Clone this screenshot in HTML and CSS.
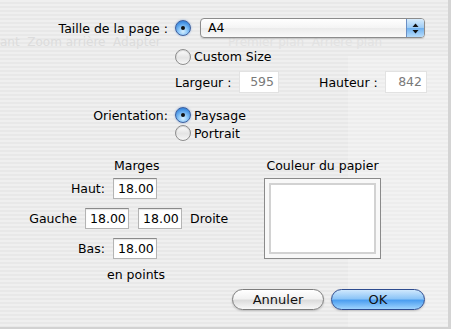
FILE: index.html
```html
<!DOCTYPE html>
<html lang="fr">
<head>
    <meta charset="UTF-8">
    <title>Mise en page</title>
    <link rel="stylesheet" href="styles.css">
</head>
<body>
    <div class="sheet">
        <!-- ghosted toolbar behind the sheet -->
        <div class="ghost">
            <span class="ghost-left">ant&nbsp;&nbsp;Zoom arrière&nbsp;&nbsp;Adapter</span>
            <span class="ghost-right">Premier plan&nbsp;&nbsp;Arrière plan</span>
        </div>
        <div class="ghost-pane"></div>

        <div class="form">
            <div class="row row-size">
                <label class="label">Taille de la page :</label>
                <div class="ctrl">
                    <span class="radio on"></span>
                    <div class="popup">
                        <span class="popup-text">A4</span>
                        <span class="popup-arrows">
                            <svg width="7" height="11" viewBox="0 0 7 11">
                                <path d="M3.5 0.5 L6.5 4 L0.5 4 Z" fill="#111"/>
                                <path d="M3.5 10.5 L6.5 7 L0.5 7 Z" fill="#111"/>
                            </svg>
                        </span>
                    </div>
                </div>
            </div>

            <div class="row row-custom">
                <span></span>
                <div class="ctrl">
                    <span class="radio"></span>
                    <span class="opt">Custom Size</span>
                </div>
            </div>

            <div class="row row-dims">
                <span></span>
                <div class="ctrl dims">
                    <span class="dim-label">Largeur :</span>
                    <span class="field num">595</span>
                    <span class="dim-label hauteur">Hauteur :</span>
                    <span class="field num wide">842</span>
                </div>
            </div>

            <div class="row row-orient">
                <label class="label">Orientation:</label>
                <div class="ctrl">
                    <span class="radio on"></span>
                    <span class="opt">Paysage</span>
                </div>
            </div>

            <div class="row row-portrait">
                <span></span>
                <div class="ctrl">
                    <span class="radio"></span>
                    <span class="opt">Portrait</span>
                </div>
            </div>
        </div>

        <div class="lower">
            <div class="margins">
                <div class="title">Marges</div>
                <div class="mrow">
                    <span class="mlabel" style="width: 105px">Haut:</span>
                    <span class="field">18.00</span>
                </div>
                <div class="mrow">
                    <span class="mlabel" style="width: 77px">Gauche</span>
                    <span class="field">18.00</span>
                    <span class="field right">18.00</span>
                    <span class="side">Droite</span>
                </div>
                <div class="mrow">
                    <span class="mlabel" style="width: 105px">Bas:</span>
                    <span class="field">18.00</span>
                </div>
                <div class="units">en points</div>
            </div>

            <div class="paper">
                <div class="title">Couleur du papier</div>
                <div class="well">
                    <div class="well-inner"></div>
                </div>
            </div>
        </div>

        <div class="buttons">
            <button type="button" class="btn">Annuler</button>
            <button type="button" class="btn default">OK</button>
        </div>
    </div>
</body>
</html>
```

FILE: styles.css
```css
* {
    box-sizing: border-box;
}

body {
    margin: 0;
    font-family: "DejaVu Sans", "Liberation Sans", sans-serif;
    font-size: 12.5px;
    color: #000;
}

.sheet {
    position: relative;
    width: 451px;
    height: 329px;
    background: repeating-linear-gradient(to bottom, #efefef 0, #efefef 2px, #e8e8e8 2px, #e8e8e8 4px);
    border-right: 3px solid #d4d4d4;
    border-bottom: 2px solid #d2d2d2;
    padding-top: 18px;
    overflow: hidden;
}

.ghost {
    position: absolute;
    left: 0;
    top: 35px;
    width: 100%;
    color: #dcdcdc;
    font-size: 12px;
    white-space: nowrap;
}

.ghost-left {
    position: absolute;
    left: 0;
}

.ghost-right {
    position: absolute;
    left: 228px;
    color: #e2e2e2;
}

.ghost-pane {
    position: absolute;
    left: 348px;
    top: 56px;
    right: 0;
    bottom: 0;
    background: rgba(255, 255, 255, 0.22);
}

.form {
    position: relative;
}

.row {
    display: grid;
    grid-template-columns: 168px 1fr;
    column-gap: 7px;
    align-items: center;
    padding-right: 23px;
}

.label {
    text-align: right;
    white-space: nowrap;
}

.ctrl {
    display: flex;
    align-items: center;
}

.row-size { height: 20px; }
.row-custom { height: 19px; margin-top: 9px; }
.row-dims { height: 22px; margin-top: 5px; }
.row-orient { height: 18px; margin-top: 13px; }
.row-portrait { height: 18px; }

.radio {
    position: relative;
    width: 16px;
    height: 16px;
    flex: none;
    border-radius: 50%;
    border: 1px solid #8d8d8d;
    background: linear-gradient(to bottom, #fdfdfd, #e4e4e4 55%, #f7f7f7);
    box-shadow: inset 0 1px 1px rgba(0, 0, 0, 0.15);
}

.radio.on {
    border-color: #3d5f9e;
    background: radial-gradient(circle at 50% 75%, #d6efff 0, #8cc6f7 35%, #3d8ce0 75%, #2f72cc 100%);
    box-shadow: 0 0 2px rgba(40, 110, 210, 0.5);
}

.radio.on::after {
    content: "";
    position: absolute;
    left: 5px;
    top: 5px;
    width: 4px;
    height: 4px;
    border-radius: 50%;
    background: #111;
}

.opt {
    margin-left: 3px;
}

.popup {
    flex: 1;
    display: flex;
    height: 20px;
    margin-left: 9px;
    border: 1px solid #8c8c8c;
    border-radius: 4px;
    background: linear-gradient(to bottom, #ffffff, #f4f4f4 50%, #ebebeb 51%, #fafafa);
    box-shadow: 0 1px 1px rgba(0, 0, 0, 0.15);
    overflow: hidden;
}

.popup-text {
    flex: 1;
    padding-left: 7px;
    line-height: 18px;
}

.popup-arrows {
    width: 18px;
    display: flex;
    align-items: center;
    justify-content: center;
    border-left: 1px solid #6b8fc4;
    background: linear-gradient(to bottom, #d8ecfc, #9ccbf5 50%, #6fb1f0 51%, #b6dcfb);
}

.dim-label {
    width: 64px;
}

.dim-label.hauteur {
    width: 66px;
    margin-left: 40px;
}

.field {
    display: inline-block;
    width: 44px;
    height: 21px;
    padding: 0 4px;
    line-height: 20px;
    background: #fff;
    border: 1px solid #b4b4b4;
    border-top-color: #8a8a8a;
    box-shadow: inset 0 1px 1px rgba(0, 0, 0, 0.1);
}

.field.num {
    width: 40px;
    height: 22px;
    text-align: right;
    color: #7a7a7a;
    border-color: #e2e2e2;
    box-shadow: none;
}

.field.num.wide {
    width: 42px;
}

.lower {
    position: relative;
    display: flex;
    margin-top: 16px;
}

.title {
    height: 16px;
    line-height: 16px;
    text-align: center;
    margin-bottom: 4px;
}

.margins {
    width: 264px;
}

.margins .title {
    width: 273px;
    text-align: left;
    padding-left: 114px;
}

.mrow {
    display: flex;
    align-items: center;
    height: 21px;
    margin-bottom: 9px;
}

.mlabel {
    text-align: right;
    margin-right: 8px;
}

.field.right {
    margin-left: 9px;
}

.side {
    margin-left: 8px;
}

.units {
    padding-left: 107px;
    margin-top: -1px;
    line-height: 16px;
}

.paper {
    width: 117px;
}

.paper .title {
    margin: 0 -20px 4px;
}

.well {
    width: 117px;
    height: 81px;
    padding: 4px;
    background: #f8f8f8;
    border: 1px solid #8a8a8a;
}

.well-inner {
    width: 100%;
    height: 100%;
    background: #fff;
    border: 2px solid #d2d2d2;
}

.buttons {
    position: relative;
    display: flex;
    justify-content: flex-end;
    gap: 7px;
    padding-right: 23px;
    margin-top: 6px;
}

.btn {
    height: 21px;
    border-radius: 11px;
    font: inherit;
    font-size: 13px;
    color: #111;
    padding: 0;
    border: 1px solid #7d7d7d;
    background: linear-gradient(to bottom, #ffffff, #f2f2f2 45%, #dcdcdc 55%, #f8f8f8);
    box-shadow: 0 1px 2px rgba(0, 0, 0, 0.2);
    width: 92px;
}

.btn.default {
    width: 94px;
    border-color: #2e4c8f;
    background: linear-gradient(to bottom, #cfe8fd, #8dc5f7 45%, #4d9ff0 55%, #9fd4fd);
}
```
